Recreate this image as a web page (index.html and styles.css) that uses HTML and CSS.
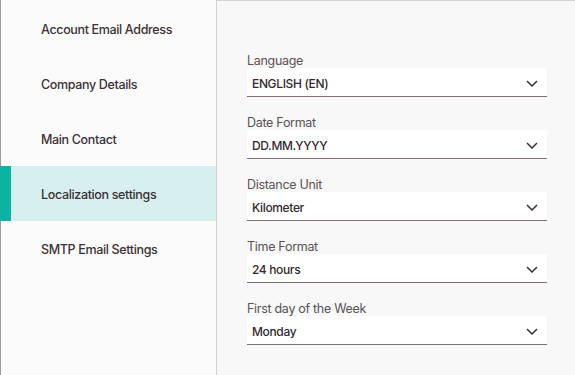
FILE: index.html
```html
<!DOCTYPE html>
<html>
<head>
<meta charset="utf-8">
<link rel="stylesheet" href="styles.css">
</head>
<body>
<div class="app">
  <nav class="sidebar">
    <div class="nav-item">Account Email Address</div>
    <div class="nav-item">Company Details</div>
    <div class="nav-item">Main Contact</div>
    <div class="nav-item active">Localization settings</div>
    <div class="nav-item">SMTP Email Settings</div>
  </nav>
  <main class="content">
    <div class="field">
      <div class="label">Language</div>
      <div class="select"><span>ENGLISH (EN)</span><svg class="chev" width="12" height="7" viewBox="0 0 12 7"><path d="M1 1l5 5 5-5" fill="none" stroke="#3a2f35" stroke-width="1.5"/></svg></div>
    </div>
    <div class="field">
      <div class="label">Date Format</div>
      <div class="select"><span>DD.MM.YYYY</span><svg class="chev" width="12" height="7" viewBox="0 0 12 7"><path d="M1 1l5 5 5-5" fill="none" stroke="#3a2f35" stroke-width="1.5"/></svg></div>
    </div>
    <div class="field">
      <div class="label">Distance Unit</div>
      <div class="select"><span>Kilometer</span><svg class="chev" width="12" height="7" viewBox="0 0 12 7"><path d="M1 1l5 5 5-5" fill="none" stroke="#3a2f35" stroke-width="1.5"/></svg></div>
    </div>
    <div class="field">
      <div class="label">Time Format</div>
      <div class="select"><span>24 hours</span><svg class="chev" width="12" height="7" viewBox="0 0 12 7"><path d="M1 1l5 5 5-5" fill="none" stroke="#3a2f35" stroke-width="1.5"/></svg></div>
    </div>
    <div class="field">
      <div class="label">First day of the Week</div>
      <div class="select"><span>Monday</span><svg class="chev" width="12" height="7" viewBox="0 0 12 7"><path d="M1 1l5 5 5-5" fill="none" stroke="#3a2f35" stroke-width="1.5"/></svg></div>
    </div>
  </main>
</div>
</body>
</html>
```

FILE: styles.css
```css
* { box-sizing: border-box; }
html, body { margin: 0; padding: 0; }
body {
  font-family: Inter, "Noto Sans", sans-serif;
  background: #f8f8f8;
  width: 575px;
  height: 375px;
  overflow: hidden;
}
.app {
  display: flex;
  height: 375px;
  border-left: 1px solid #9a9a9a;
}
.sidebar {
  width: 216px;
  flex: none;
  background: #fcfbfc;
  border-right: 1px solid #d2d2d2;
  padding-top: 1px;
}
.nav-item {
  height: 55px;
  display: flex;
  align-items: center;
  padding: 2px 0 0 40px;
  font-size: 12.5px;
  font-weight: 500;
  letter-spacing: -0.35px;
  color: #3b3036;
}
.nav-item.active {
  background: #d7f0ef;
  border-left: 11px solid #0cb3a0;
  padding-left: 30px;
  margin-left: -1px;
}
.content {
  flex: 1;
  border-top: 1px solid #d4d4d4;
  background: #f8f8f8;
  padding: 51px 28px 0 30px;
  display: flex;
  flex-direction: column;
  gap: 17px;
}
.label {
  height: 16px;
  line-height: 16px;
  padding-top: 1px;
  font-size: 12.5px;
  color: #5a5256;
  letter-spacing: -0.3px;
}
.select {
  height: 29px;
  background: #fff;
  border-bottom: 1px solid #7b7176;
  display: flex;
  align-items: center;
  justify-content: space-between;
  padding: 2px 9px 0 5px;
  font-size: 12px;
  font-weight: 500;
  letter-spacing: -0.35px;
  color: #33292f;
}
.chev { display: block; }
```
